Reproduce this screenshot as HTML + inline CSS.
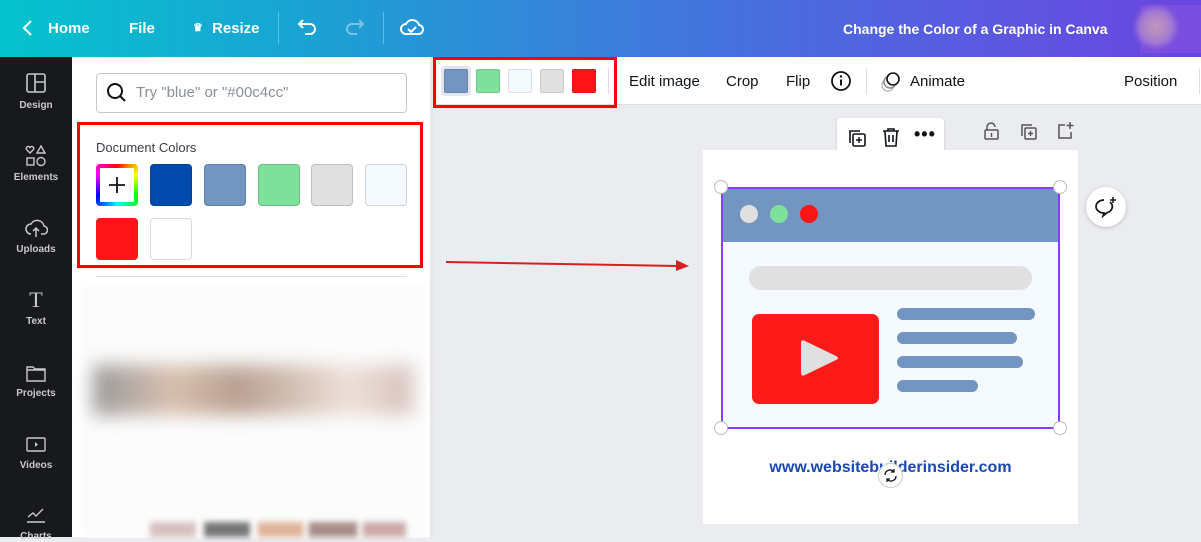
<!DOCTYPE html>
<html><head><meta charset="utf-8"><style>
*{box-sizing:border-box;margin:0;padding:0}
body{width:1201px;height:537px;overflow:hidden;position:relative;font-family:"Liberation Sans",Arial,sans-serif;background:#ebecf0}
.a{position:absolute}
.top{left:0;top:0;width:1201px;height:57px;background:linear-gradient(90deg,#05c3ce 0%,#1aa3d3 25%,#3a7fdb 50%,#5560e0 75%,#6a45e0 100%);color:#fff;font-weight:bold;font-size:15px}
.side{left:0;top:57px;width:72px;height:480px;background:#18191b;color:#c8c9cc;font-size:10px;font-weight:bold;text-align:center}
.side div{position:absolute;left:0;width:72px}
.sw{position:absolute;width:42px;height:42px;border-radius:4px;border:1px solid rgba(0,0,0,.15)}
.ts{position:absolute;width:24px;height:24px;border-radius:2px;top:69px;border:1px solid rgba(0,0,0,.1)}
.tb{font-size:15px;color:#0e1318;top:73px}
.line{position:absolute;left:897px;height:12px;border-radius:6px;background:#7295c2}
.h{position:absolute;width:14px;height:14px;border-radius:50%;background:#fff;border:1px solid #bbb}
</style></head><body>
<div class="a top">
 <svg class="a" style="left:22px;top:19px" width="12" height="18"><path d="M9 2L2 9l7 7" stroke="#fff" stroke-width="2" fill="none"/></svg>
 <span class="a" style="left:48px;top:20px">Home</span>
 <span class="a" style="left:129px;top:20px">File</span>
 <span class="a" style="left:193px;top:21px;font-size:11px">♛</span>
 <span class="a" style="left:212px;top:20px">Resize</span>
 <div class="a" style="left:278px;top:12px;width:1px;height:32px;background:rgba(255,255,255,.3)"></div>
 <svg class="a" style="left:297px;top:17px" width="22" height="20"><path d="M6 3L2 7l4 4M2 7h11a5 5 0 010 10H8" stroke="#fff" stroke-width="2" fill="none"/></svg>
 <svg class="a" style="left:343px;top:17px" width="22" height="20" opacity=".4"><path d="M16 3l4 4-4 4M20 7H9a5 5 0 000 10h5" stroke="#fff" stroke-width="2" fill="none"/></svg>
 <div class="a" style="left:383px;top:12px;width:1px;height:32px;background:rgba(255,255,255,.3)"></div>
 <svg class="a" style="left:400px;top:16px" width="24" height="22"><path d="M6 18a5 5 0 010-10 7 7 0 0113 1 4.5 4.5 0 01-1 9z" stroke="#fff" stroke-width="2" fill="none"/><path d="M8 13l3 3 5-5" stroke="#fff" stroke-width="2" fill="none"/></svg>
 <span class="a" style="left:843px;top:21px;font-size:14px">Change the Color of a Graphic in Canva</span>
 <div class="a" style="left:1140px;top:5px;width:61px;height:48px;background:#7a4ee0"></div>
 <div class="a" style="left:1136px;top:7px;width:40px;height:40px;border-radius:50%;background:radial-gradient(#c59ab8,#9b72d6 70%,#7a4ee0);filter:blur(3px)"></div>
</div>
<div class="a side">
 <svg style="position:absolute;left:26px;top:16px" width="20" height="20"><rect x="1" y="1" width="18" height="18" rx="2" stroke="#c8c9cc" stroke-width="1.6" fill="none"/><path d="M9 1v18M9 9h10" stroke="#c8c9cc" stroke-width="1.6"/></svg>
 <div style="top:43px">Design</div>
 <svg style="position:absolute;left:25px;top:88px" width="22" height="22"><path d="M5 8L1.5 4.5a2 2 0 013.5-2 2 2 0 013.5 2z M16 1l4 7h-8z" stroke="#c8c9cc" stroke-width="1.4" fill="none"/><rect x="2" y="13" width="7" height="7" stroke="#c8c9cc" stroke-width="1.4" fill="none"/><circle cx="16" cy="16.5" r="4" stroke="#c8c9cc" stroke-width="1.4" fill="none"/></svg>
 <div style="top:115px">Elements</div>
 <svg style="position:absolute;left:24px;top:160px" width="24" height="22"><path d="M7 17a5 5 0 010-10 7 7 0 0113 2 4 4 0 01-1 8h-2M12 20v-9M9 14l3-3 3 3" stroke="#c8c9cc" stroke-width="1.5" fill="none"/></svg>
 <div style="top:187px">Uploads</div>
 <div style="top:230px;font-family:'Liberation Serif',serif;font-size:22px;font-weight:normal">T</div>
 <div style="top:259px">Text</div>
 <svg style="position:absolute;left:26px;top:308px" width="20" height="18"><path d="M1 2h6l2 2h10v12H1z M1 5h18" stroke="#c8c9cc" stroke-width="1.4" fill="none"/></svg>
 <div style="top:331px">Projects</div>
 <svg style="position:absolute;left:26px;top:380px" width="20" height="16"><rect x="1" y="1" width="18" height="13" rx="1" stroke="#c8c9cc" stroke-width="1.4" fill="none"/><path d="M9 5l3 2.5-3 2.5z" fill="#c8c9cc"/></svg>
 <div style="top:403px">Videos</div>
 <svg style="position:absolute;left:26px;top:450px" width="20" height="16"><path d="M2 10l5-4 3 3 7-7M1 15h18" stroke="#c8c9cc" stroke-width="1.4" fill="none"/></svg>
 <div style="top:474px">Charts</div>
</div>
<div class="a" style="left:72px;top:57px;width:358px;height:480px;background:#fff"></div>
<div class="a" style="left:430px;top:57px;width:3px;height:480px;background:#e6e7eb"></div>
<div class="a" style="left:96px;top:73px;width:311px;height:40px;border:1px solid #c5c7cc;border-radius:4px"></div>
<svg class="a" style="left:106px;top:82px" width="22" height="22"><circle cx="9" cy="9" r="7" stroke="#0e1318" stroke-width="2" fill="none"/><path d="M14 14l5 5" stroke="#0e1318" stroke-width="2"/></svg>
<span class="a" style="left:136px;top:84px;font-size:15px;color:#8a8f99">Try "blue" or "#00c4cc"</span>
<div class="a" style="left:77px;top:122px;width:346px;height:146px;border:3px solid #ff0000"></div>
<span class="a" style="left:96px;top:140px;font-size:13px;color:#3c4046">Document Colors</span>
<div class="sw" style="left:96px;top:164px;background:conic-gradient(red,yellow,lime,cyan,blue,magenta,red);border:none"><div style="position:absolute;left:4px;top:4px;width:34px;height:34px;background:#fff;border-radius:1px"></div><svg style="position:absolute;left:10px;top:10px" width="22" height="22"><path d="M11 3v16M3 11h16" stroke="#0e1318" stroke-width="1.8"/></svg></div>
<div class="sw" style="left:150px;top:164px;background:#034aad"></div>
<div class="sw" style="left:204px;top:164px;background:#7295c2"></div>
<div class="sw" style="left:258px;top:164px;background:#7fe09c"></div>
<div class="sw" style="left:311px;top:164px;background:#e0e0e0"></div>
<div class="sw" style="left:365px;top:164px;background:#f4faff"></div>
<div class="sw" style="left:96px;top:218px;background:#ff1518;border:none"></div>
<div class="sw" style="left:150px;top:218px;background:#fff"></div>
<div class="a" style="left:96px;top:276px;width:311px;height:1px;background:#e0e2e6"></div>
<div class="a" style="left:82px;top:285px;width:343px;height:252px;background:#fcfcfc;filter:blur(2px)"></div>
<div class="a" style="left:93px;top:365px;width:320px;height:50px;filter:blur(9px);background:linear-gradient(90deg,#999 0%,#d8c0b0 25%,#b9a092 45%,#d6c4b8 65%,#efe0da 80%,#d6c0bb 100%)"></div>
<div class="a" style="left:150px;top:522px;width:256px;height:15px;filter:blur(3px);background:linear-gradient(90deg,#d8c0c0 0 18%,#fff 18% 21%,#777 21% 39%,#fff 39% 42%,#e0b59a 42% 60%,#fff 60% 62%,#a88e88 62% 81%,#fff 81% 83%,#caa 83%)"></div>
<div class="a" style="left:433px;top:57px;width:768px;height:48px;background:#fff;border-bottom:1px solid #dcdee2"></div>
<div class="a" style="left:441px;top:66px;width:30px;height:30px;border-radius:4px;background:#e4e6ea"></div>
<div class="ts" style="left:444px;background:#7295c2"></div>
<div class="ts" style="left:476px;background:#7fe09c"></div>
<div class="ts" style="left:508px;background:#f4faff"></div>
<div class="ts" style="left:540px;background:#e0e0e0"></div>
<div class="ts" style="left:572px;background:#ff1518"></div>
<div class="a" style="left:433px;top:57px;width:184px;height:51px;border:3px solid #ff0000"></div>
<div class="a" style="left:608px;top:68px;width:1px;height:26px;background:#dcdee2"></div>
<span class="a tb" style="left:629px">Edit image</span>
<span class="a tb" style="left:726px">Crop</span>
<span class="a tb" style="left:786px">Flip</span>
<svg class="a" style="left:830px;top:70px" width="22" height="22"><circle cx="11" cy="11" r="9" stroke="#0e1318" stroke-width="1.8" fill="none"/><path d="M11 9.5v6" stroke="#0e1318" stroke-width="2"/><circle cx="11" cy="6.5" r="1.2" fill="#0e1318"/></svg>
<div class="a" style="left:866px;top:68px;width:1px;height:26px;background:#dcdee2"></div>
<svg class="a" style="left:879px;top:70px" width="24" height="24"><circle cx="9" cy="15" r="6" stroke="#bbb" stroke-width="1.4" fill="none"/><circle cx="11" cy="12" r="6" stroke="#888" stroke-width="1.4" fill="#fff"/><circle cx="14" cy="9" r="6" stroke="#0e1318" stroke-width="1.6" fill="#fff"/></svg>
<span class="a tb" style="left:910px">Animate</span>
<span class="a tb" style="left:1124px">Position</span>
<div class="a" style="left:1199px;top:68px;width:1px;height:26px;background:#dcdee2"></div>
<div class="a" style="left:837px;top:118px;width:107px;height:39px;background:#fff;border-radius:4px;box-shadow:0 1px 3px rgba(0,0,0,.15)"></div>
<svg class="a" style="left:846px;top:127px" width="22" height="22"><path d="M4 16V4h10" stroke="#0e1318" stroke-width="1.6" fill="none"/><rect x="7" y="7" width="12" height="12" rx="1.5" stroke="#0e1318" stroke-width="1.6" fill="none"/><path d="M13 10v6M10 13h6" stroke="#0e1318" stroke-width="1.5"/></svg>
<svg class="a" style="left:880px;top:126px" width="22" height="22"><path d="M3 5h16M8 5V3h6v2M5 5l1 15h10l1-15M9 9v7M13 9v7" stroke="#0e1318" stroke-width="1.6" fill="none"/></svg>
<span class="a" style="left:914px;top:124px;font-size:18px;font-weight:bold;letter-spacing:1px;color:#0e1318">•••</span>
<svg class="a" style="left:982px;top:121px" width="20" height="20"><path d="M5 9V6a4 4 0 018 0" stroke="#555" stroke-width="1.5" fill="none"/><rect x="3" y="9" width="13" height="9" rx="1" stroke="#555" stroke-width="1.5" fill="none"/><path d="M9.5 12v4" stroke="#555" stroke-width="1.4"/></svg>
<svg class="a" style="left:1019px;top:122px" width="20" height="20"><path d="M3 14V3h10" stroke="#555" stroke-width="1.5" fill="none"/><rect x="6" y="6" width="11" height="11" rx="1" stroke="#555" stroke-width="1.5" fill="none"/><path d="M11.5 9v5M9 11.5h5" stroke="#555" stroke-width="1.4"/></svg>
<svg class="a" style="left:1055px;top:121px" width="20" height="20"><path d="M10 4H4v13h12v-6" stroke="#555" stroke-width="1.5" fill="none"/><path d="M15 1v7M11.5 4.5h7" stroke="#555" stroke-width="1.5"/></svg>
<div class="a" style="left:703px;top:150px;width:375px;height:374px;background:#fff"></div>
<div class="a" style="left:722px;top:188px;width:337px;height:240px;background:#f4faff"></div>
<div class="a" style="left:722px;top:188px;width:337px;height:54px;background:#7295c2"></div>
<div class="a" style="left:740px;top:205px;width:18px;height:18px;border-radius:50%;background:#e0e0e0"></div>
<div class="a" style="left:770px;top:205px;width:18px;height:18px;border-radius:50%;background:#7fe09c"></div>
<div class="a" style="left:800px;top:205px;width:18px;height:18px;border-radius:50%;background:#ff1518"></div>
<div class="a" style="left:749px;top:266px;width:283px;height:24px;border-radius:12px;background:#e0e0e0"></div>
<div class="a" style="left:752px;top:314px;width:127px;height:90px;border-radius:7px;background:#ff1a1a"></div>
<svg class="a" style="left:798px;top:339px" width="44" height="42"><path d="M3 4Q3 0 7 2L38 17Q42 19 38 21L7 36Q3 38 3 34Z" fill="#e0e0e0"/></svg>
<div class="line" style="top:308px;width:138px"></div>
<div class="line" style="top:332px;width:120px"></div>
<div class="line" style="top:356px;width:126px"></div>
<div class="line" style="top:380px;width:81px"></div>
<div class="a" style="left:721px;top:187px;width:339px;height:242px;border:2px solid #8b3dff"></div>
<div class="h" style="left:714px;top:180px"></div>
<div class="h" style="left:1053px;top:180px"></div>
<div class="h" style="left:714px;top:421px"></div>
<div class="h" style="left:1053px;top:421px"></div>
<span class="a" style="left:703px;width:375px;text-align:center;top:459px;font-size:16px;font-weight:bold;color:#1848b0">www.websitebuilderinsider.com</span>
<div class="a" style="left:878px;top:463px;width:25px;height:25px;border-radius:50%;background:#fff;border:1px solid #ccc"></div>
<svg class="a" style="left:882px;top:467px" width="17" height="17"><path d="M3 8a5 5 0 019-3M14 9a5 5 0 01-9 3" stroke="#0e1318" stroke-width="1.3" fill="none"/><path d="M12 2v3h-3M5 15v-3h3" stroke="#0e1318" stroke-width="1.3" fill="none"/></svg>
<div class="a" style="left:1086px;top:187px;width:40px;height:40px;border-radius:50%;background:#fff;box-shadow:0 1px 4px rgba(0,0,0,.2)"></div>
<svg class="a" style="left:1094px;top:196px" width="24" height="22"><path d="M10 4a8 6.5 0 100 13l-1 3 4-3.3A8 6.5 0 0016 6" stroke="#0e1318" stroke-width="1.7" fill="none"/><path d="M19 1v6M16 4h6" stroke="#0e1318" stroke-width="1.5"/></svg>
<svg class="a" style="left:440px;top:254px" width="252" height="20"><path d="M6 8L238 12" stroke="#d62020" stroke-width="2"/><path d="M236 6L249 12L236 17z" fill="#d62020"/></svg>
</body></html>
